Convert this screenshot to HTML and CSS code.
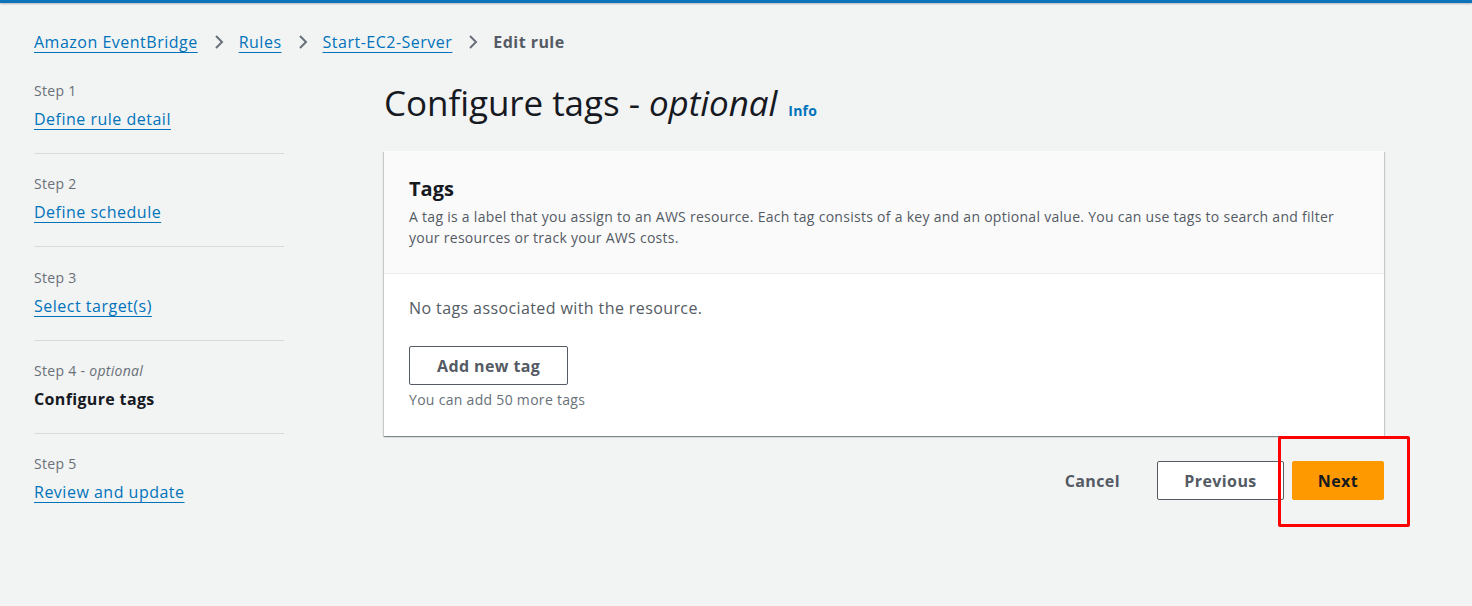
FILE: index.html
```html
<!DOCTYPE html>
<html lang="en">
<head>
<meta charset="utf-8">
<title>Edit rule - Configure tags</title>
<link rel="stylesheet" href="styles.css">
</head>
<body>
<div class="topbar"></div>
<div class="page">
  <nav class="breadcrumbs">
    <a href="#">Amazon EventBridge</a>
    <svg class="chev" viewBox="0 0 16 16" width="16" height="16"><path d="M5 2l6 6-6 6" fill="none" stroke="#687078" stroke-width="2"/></svg>
    <a href="#">Rules</a>
    <svg class="chev" viewBox="0 0 16 16" width="16" height="16"><path d="M5 2l6 6-6 6" fill="none" stroke="#687078" stroke-width="2"/></svg>
    <a href="#">Start-EC2-Server</a>
    <svg class="chev" viewBox="0 0 16 16" width="16" height="16"><path d="M5 2l6 6-6 6" fill="none" stroke="#687078" stroke-width="2"/></svg>
    <span class="current">Edit rule</span>
  </nav>
  <div class="layout">
    <ul class="steps">
      <li class="step">
        <div class="step-label">Step 1</div>
        <a class="step-link" href="#">Define rule detail</a>
      </li>
      <li class="step">
        <div class="step-label">Step 2</div>
        <a class="step-link" href="#">Define schedule</a>
      </li>
      <li class="step">
        <div class="step-label">Step 3</div>
        <a class="step-link" href="#">Select target(s)</a>
      </li>
      <li class="step">
        <div class="step-label">Step 4 - <i>optional</i></div>
        <span class="step-active">Configure tags</span>
      </li>
      <li class="step">
        <div class="step-label">Step 5</div>
        <a class="step-link" href="#">Review and update</a>
      </li>
    </ul>
    <main class="main">
      <h1 class="title">Configure tags - <i>optional</i> <a class="info" href="#">Info</a></h1>
      <section class="container">
        <header class="container-header">
          <h2 class="container-title">Tags</h2>
          <p class="container-desc">A tag is a label that you assign to an AWS resource. Each tag consists of a key and an optional value. You can use tags to search and filter your resources or track your AWS costs.</p>
        </header>
        <div class="container-body">
          <p class="empty">No tags associated with the resource.</p>
          <button class="btn btn-normal btn-add">Add new tag</button>
          <p class="hint">You can add 50 more tags</p>
        </div>
      </section>
      <div class="actions">
        <button class="btn btn-link">Cancel</button>
        <button class="btn btn-normal btn-prev">Previous</button>
        <button class="btn btn-primary">Next</button>
        <div class="highlight"></div>
      </div>
    </main>
  </div>
</div>
</body>
</html>
```
FILE: styles.css
```css
* { box-sizing: border-box; }
html, body { margin: 0; padding: 0; }
body {
  background: #f2f3f3;
  font-family: "Open Sans", "Noto Sans", sans-serif;
  color: #16191f;
  height: 606px;
  overflow: hidden;
}
.topbar {
  height: 3px;
  background: #0f73b9;
  box-shadow: 0 1px 2px rgba(0,0,0,0.25);
}
.page {
  padding: 0 34px;
}
.breadcrumbs {
  display: flex;
  align-items: center;
  margin-top: 27px;
  height: 24px;
  font-size: 16px;
  line-height: 24px;
  letter-spacing: 0.5px;
}
.breadcrumbs a {
  color: #0073bb;
  text-decoration: underline;
  text-underline-offset: 4px;
  text-decoration-thickness: 1px;
}
.chev { margin: 0 12px 0 13px; flex: none; }
.breadcrumbs .current { color: #545b64; font-weight: 700; letter-spacing: 0.45px; }
.layout {
  display: flex;
  gap: 100px;
}
.steps {
  list-style: none;
  margin: 27px 0 0;
  padding: 0;
  width: 250px;
  flex: none;
}
.step {
  padding: 0 0 22px;
  border-bottom: 1px solid #d5dbdb;
  margin-bottom: 20.3px;
}
.step:last-child { border-bottom: none; }
.step-label {
  font-size: 14px;
  line-height: 20px;
  color: #687078;
  margin-bottom: 6px;
  letter-spacing: 0.3px;
}
.step-link, .step-active {
  font-size: 16px;
  line-height: 24px;
  display: inline-block;
}
.step-link {
  color: #0073bb;
  text-decoration: underline;
  text-underline-offset: 4px;
  letter-spacing: 0.5px;
}
.step-active { font-weight: 700; color: #16191f; letter-spacing: 0.35px; }
.main {
  flex: none;
  width: 1000px;
}
.title {
  margin: 29px 0 0;
  font-size: 35px;
  line-height: 40px;
  font-weight: 400;
  color: #16191f;
  height: 68px;
  letter-spacing: -0.05px;
}
.title i { font-style: italic; }
.info {
  font-size: 14px;
  font-weight: 700;
  color: #0073bb;
  text-decoration: none;
  margin-left: 2px;
  letter-spacing: 0.2px;
}
.container {
  background: #fff;
  box-shadow: 0 1px 1px 0 rgba(0,28,36,0.3), 1px 1px 1px 0 rgba(0,28,36,0.15), -1px 1px 1px 0 rgba(0,28,36,0.15);
}
.container-header {
  background: #fafafa;
  border-bottom: 1px solid #eaeded;
  padding: 24px 25px 25px 25px;
}
.container-title {
  margin: 0;
  font-size: 20px;
  line-height: 28px;
  font-weight: 700;
  color: #16191f;
}
.container-desc {
  margin: 3px 0 0;
  font-size: 14px;
  line-height: 21px;
  color: #545b64;
  letter-spacing: 0.28px;
}
.container-body {
  padding: 22px 25px 26px;
}
.empty {
  margin: 0 0 26px;
  font-size: 16px;
  line-height: 24px;
  color: #545b64;
  letter-spacing: 0.4px;
}
.btn {
  font-family: inherit;
  font-size: 16px;
  font-weight: 700;
  line-height: 22px;
  border-radius: 2px;
  padding: 8px 25px;
  height: 39px;
  cursor: pointer;
  letter-spacing: 0.4px;
}
.btn-normal {
  background: #fff;
  border: 1px solid #545b64;
  color: #545b64;
}
.btn-add { padding: 8px 27px; }
.hint {
  margin: 5px 0 0;
  font-size: 14px;
  line-height: 20px;
  color: #687078;
  letter-spacing: 0.3px;
}
.actions {
  position: relative;
  display: flex;
  justify-content: flex-end;
  align-items: center;
  gap: 8px;
  margin-top: 25px;
}
.btn-link {
  background: none;
  border: 1px solid transparent;
  color: #545b64;
  margin-right: 3px;
}
.btn-prev { width: 127px; padding: 8px 0; }
.btn-primary {
  background: #ff9900;
  border: 1px solid #ff9900;
  color: #16191f;
  width: 92px;
  padding: 8px 0;
}
.highlight {
  position: absolute;
  left: 894px;
  top: -25px;
  width: 132px;
  height: 91px;
  border: 3px solid #ff0000;
  border-radius: 2px;
  pointer-events: none;
}
```
